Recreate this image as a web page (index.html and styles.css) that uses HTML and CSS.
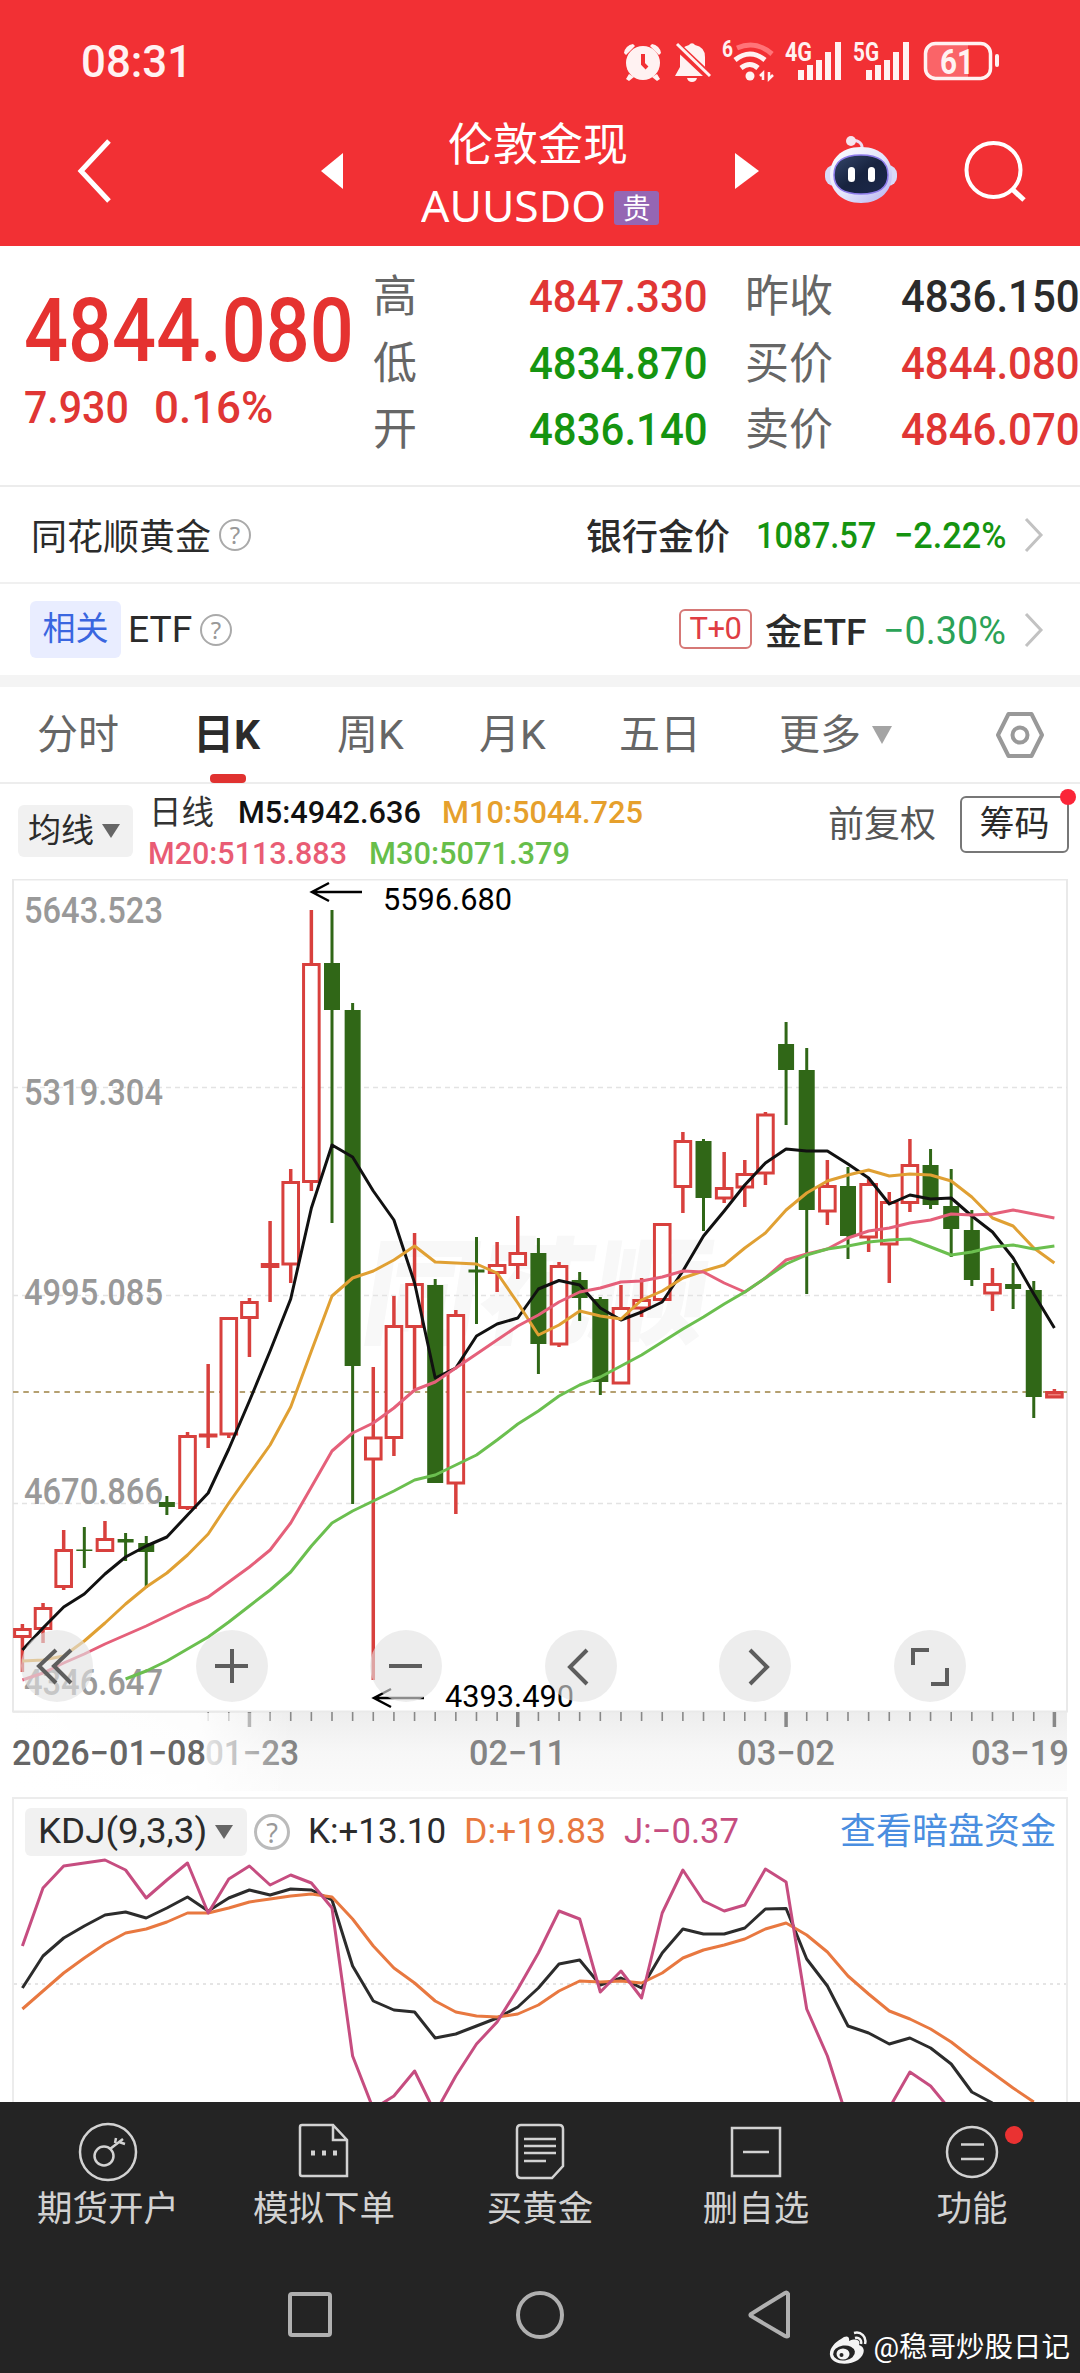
FILE: index.html
```html
<!DOCTYPE html>
<html lang="zh-CN">
<head>
<meta charset="utf-8">
<title>伦敦金现 AUUSDO</title>
<link rel="stylesheet" href="styles.css">
</head>
<body>
<header class="top">
  <div class="status">
    <span class="clock" data-w="111">08:31</span>
    <svg class="status-icons" width="384" height="50" viewBox="616 36 384 50">
      <g fill="#fff2f2" stroke="none">
        <circle cx="643" cy="63" r="17"/>
        <path d="M624 53a10 10 0 0 1 9-9l2 2-9 9zM661 53a10 10 0 0 0-9-9l-2 2 9 9zM629 74l5 3-5 4-3-2zM657 74l-5 3 5 4 3-2z"/>
        <path d="M643 54v10l4 4" fill="none" stroke="#f23034" stroke-width="4"/>
        <path d="M675 76l5-9V57q0-10 9-12a3.500 3.500 0 0 1 6 0q10 2 10 12v10l4 9zM687 78h10q-1 4-5 4t-5-4z"/>
        <path d="M675 44l37 35" stroke="#f23034" stroke-width="8"/>
        <path d="M677 44l33 32" stroke="#fff2f2" stroke-width="3"/>
        <circle cx="750" cy="76" r="4.500"/>
      </g>
      <g fill="none" stroke="#fff2f2" stroke-width="5">
        <path d="M735 60q15-12 30 0M741 68q9-7 17 0"/>
        <path d="M737 48q19-8 35 6" stroke="#ff7478"/>
        <path d="M763 80v-7l-3 3M769 72v7l4-4" stroke-width="2.500"/>
      </g>
      <g fill="#fff2f2">
        <path d="M798 70h6v10h-6zM807 65h6v15h-6zM816 60h6v20h-6zM825 52h6v28h-6zM835 42h6v38h-6z"/>
        <path d="M866 70h6v10h-6zM875 65h6v15h-6zM884 60h6v20h-6zM893 52h6v28h-6zM903 42h6v38h-6z"/>
        <text x="722" y="57" font-size="23" textLength="11" lengthAdjust="spacingAndGlyphs">6</text>
        <text x="785" y="60.500" font-size="26" textLength="27" lengthAdjust="spacingAndGlyphs">4G</text>
        <text x="853" y="60.500" font-size="26" textLength="26" lengthAdjust="spacingAndGlyphs">5G</text>
        <path d="M935 44h33v34h-33q-9 0-9-9V53q0-9 9-9z" fill="#fa6468"/>
        <rect x="925.500" y="43.500" width="65" height="35" rx="10" fill="none" stroke="#fff2f2" stroke-width="3.500"/>
        <rect x="995" y="54" width="4" height="13" rx="2"/>
        <text x="940" y="74" font-size="35" textLength="34" lengthAdjust="spacingAndGlyphs">61</text>
      </g>
    </svg>
  </div>
  <div class="titlebar">
    <svg width="40" height="70" viewBox="0 0 40 70"><path d="M35 5L7 35 35 65" class="line-w"/></svg>
    <svg width="24" height="36" viewBox="0 0 24 36"><path d="M22 0v36L0 18z" fill="#fff"/></svg>
    <div class="name">
      <h1>伦敦金现</h1>
      <p><span data-w="185">AUUSDO</span><b class="gui">贵</b></p>
    </div>
    <svg width="26" height="36" viewBox="0 0 26 36"><path d="M0 0v36l24-18z" fill="#fff"/></svg>
    <svg width="74" height="70" viewBox="0 0 74 70">
      <defs><linearGradient id="shell" x1="0" y1="0" x2="1" y2="1"><stop offset="0" stop-color="#fff"/><stop offset=".55" stop-color="#e2e3fb"/><stop offset="1" stop-color="#b5b0f0"/></linearGradient>
      <linearGradient id="visor" x1="0" y1="0" x2="1" y2="1"><stop offset="0" stop-color="#34466a"/><stop offset=".5" stop-color="#17233f"/><stop offset="1" stop-color="#1c294c"/></linearGradient></defs>
      <path d="M38 13q1-8-10-9" fill="none" stroke="#eddcf2" stroke-width="3"/><circle cx="27" cy="5" r="5" fill="#f6e4ee"/>
      <rect x="1" y="29" width="72" height="21" rx="9" fill="#d9daf8"/>
      <path d="M37 11c21 0 31 13 31 28s-11 28-31 28S6 54 6 39s10-28 31-28z" fill="url(#shell)"/>
      <path d="M37 19c19 0 27 8 27 20s-8 19-27 19-27-7-27-19 8-20 27-20z" fill="url(#visor)" stroke="#8d7bea" stroke-width="1.500"/>
      <rect x="24" y="31" width="7" height="15" rx="3.500" fill="#fff"/><rect x="44" y="31" width="7" height="15" rx="3.500" fill="#fff"/>
    </svg>
    <svg width="64" height="64" viewBox="0 0 64 64"><circle cx="29.500" cy="31" r="27" class="line-w thin"/><path d="M48 50l12 11" class="line-w"/></svg>
  </div>
</header>

<section class="quote">
  <div class="price">
    <div class="last"><span data-w="330">4844.080</span></div>
    <div class="chg"><span data-w="105">7.930</span><span data-w="119">0.16%</span></div>
  </div>
  <dl>
    <dt>高</dt><dd class="r"><span data-w="179">4847.330</span></dd><dt>昨收</dt><dd><span data-w="179">4836.150</span></dd>
    <dt>低</dt><dd class="g"><span data-w="179">4834.870</span></dd><dt>买价</dt><dd class="r"><span data-w="179">4844.080</span></dd>
    <dt>开</dt><dd class="g"><span data-w="179">4836.140</span></dd><dt>卖价</dt><dd class="r"><span data-w="179">4846.070</span></dd>
  </dl>
</section>

<section class="row gold">
  <span class="lbl">同花顺黄金</span><i class="q">?</i>
  <span class="lbl bank">银行金价</span>
  <span class="num g" data-w="120">1087.57</span><span class="num g pct" data-w="112">−2.22%</span>
  <svg width="22" height="38" viewBox="0 0 22 38"><path d="M3 3l15 16L3 35" class="chev"/></svg>
</section>
<section class="row etf">
  <span class="tag">相关</span><span class="lbl" data-w="64">ETF</span><i class="q">?</i>
  <span class="t0">T+0</span><span class="lbl med" data-w="101">金ETF</span>
  <span class="num g2" data-w="123">−0.30%</span>
  <svg width="22" height="38" viewBox="0 0 22 38"><path d="M3 3l15 16L3 35" class="chev"/></svg>
</section>

<nav class="tabs">
  <a>分时</a><a class="on">日K</a><a>周K</a><a>月K</a><a>五日</a><a>更多</a>
  <svg class="tri" width="22" height="18" viewBox="0 0 22 18"><path d="M1 0h20L11 18z" fill="#a4a4a4"/></svg>
  <svg width="50" height="50" viewBox="0 0 50 50"><path d="M13.500 4h23L47 25 36.500 46h-23L3 25z" fill="none" stroke="#999" stroke-width="4" stroke-linejoin="round"/><circle cx="25" cy="25" r="7.500" fill="none" stroke="#999" stroke-width="4"/></svg>
</nav>

<section class="ma">
  <button class="pill">均线<svg width="18" height="14" viewBox="0 0 18 14"><path d="M0 0h18L9 14z" fill="#666"/></svg></button>
  <div class="ma-values">
    <p><span class="dx">日线</span><span data-w="183">M5:4942.636</span><span class="o" data-w="201">M10:5044.725</span></p>
    <p><span class="p" data-w="199">M20:5113.883</span><span class="gr" data-w="201">M30:5071.379</span></p>
  </div>
  <span class="fq">前复权</span>
  <button class="chip">筹码</button>
</section>

<section class="chart">
  <svg id="kline" width="1080" height="918" viewBox="0 878 1080 918"></svg>
  <div class="tools">
    <button><svg viewBox="0 0 72 72"><path d="M35 20L18 36l17 17M50 20L33 36l17 17"/></svg></button>
    <button><svg viewBox="0 0 72 72"><path d="M19 36h33M36 19v34"/></svg></button>
    <button><svg viewBox="0 0 72 72"><path d="M19 36h33"/></svg></button>
    <button><svg viewBox="0 0 72 72"><path d="M42 20L25 37l17 17"/></svg></button>
    <button><svg viewBox="0 0 72 72"><path d="M31 20l17 17-17 17"/></svg></button>
    <button><svg viewBox="0 0 72 72"><path d="M19 35V20h16M53 38v16H37"/></svg></button>
  </div>
</section>

<section class="kdj">
  <div class="kdj-head">
    <button class="pill"><span data-w="169">KDJ(9,3,3)</span><svg width="18" height="14" viewBox="0 0 18 14"><path d="M0 0h18L9 14z" fill="#666"/></svg></button>
    <i class="q">?</i>
    <span data-w="138">K:+13.10</span><span class="d" data-w="142">D:+19.83</span><span class="j" data-w="115">J:−0.37</span>
    <a>查看暗盘资金</a>
  </div>
  <svg id="osc" width="1052" height="246" viewBox="14 1855 1052 246"></svg>
</section>

<footer>
  <div class="actions">
    <a><svg viewBox="0 0 60 60"><circle cx="30" cy="30" r="28"/><circle cx="26" cy="34" r="9.500"/><path d="M32 27l13-10M37 21l1-5M41 20l6 2"/></svg>期货开户</a>
    <a><svg viewBox="0 0 60 60"><path d="M8 3h31l14 15v36H8q-2 0-2-2V5q0-2 2-2zM39 3v15h14"/><path d="M17 31h4M28 31h4M39 31h4" stroke-width="5"/></svg>模拟下单</a>
    <a><svg viewBox="0 0 60 60"><path d="M11 3h38q4 0 4 4v37L42 56H11q-4 0-4-4V7q0-4 4-4z"/><path d="M14 17h32M14 24h32M14 31h32M14 39h22"/></svg>买黄金</a>
    <a><svg viewBox="0 0 60 60"><path d="M6 6h48v48H6zM17 30h26"/></svg>删自选</a>
    <a class="dot"><svg viewBox="0 0 60 60"><circle cx="30" cy="30" r="25"/><path d="M19 22.500h23M19 37h23"/></svg>功能</a>
  </div>
  <div class="sysnav">
    <svg width="48" height="54" viewBox="0 0 48 54"><rect x="4" y="6" width="40" height="41" rx="2"/></svg>
    <svg width="54" height="54" viewBox="0 0 54 54"><circle cx="27" cy="27" r="22"/></svg>
    <svg width="48" height="54" viewBox="0 0 48 54"><path d="M42 6v42q-1 1-3 0L5 28q-1-1 0-2L39 5q2-1 3 1z"/></svg>
  </div>
  <div class="mark">
    <svg width="40" height="34" viewBox="0 0 40 34"><path d="M12 8c5-4 9-3 8 2 7-3 12-1 10 4 7 2 6 10-1 15-9 6-27 5-28-5C0 18 6 11 12 8z" fill="#f4f4f4"/><ellipse cx="15" cy="22" rx="11" ry="7.500" fill="#242424" transform="rotate(-8 15 22)"/><ellipse cx="14" cy="23" rx="6.500" ry="5.500" fill="#f4f4f4"/><circle cx="12.500" cy="24" r="2" fill="#242424"/><path d="M25 2c7-2 13 4 11 11M26 7c4-1 7 2 6 6" fill="none" stroke="#f4f4f4" stroke-width="2.500"/></svg>
    <span>@稳哥炒股日记</span>
  </div>
</footer>
<script src="chart.js"></script>
</body>
</html>
```
FILE: styles.css
```css
* { box-sizing: border-box; margin: 0; padding: 0; }
body { width: 1080px; height: 2373px; overflow: hidden; background: #fff; color: #2b2b2b; font-family: Roboto, "Noto Sans CJK SC", sans-serif; display: flex; flex-direction: column; }
body > * { flex: none; }
button { border: 0; font: inherit; color: inherit; }
svg { display: block; flex: none; }
[data-w] { display: inline-block; white-space: nowrap; flex: none; }
[data-w] > span { display: inline-block; transform-origin: 0 50%; }
.r { color: #e03634; } .g { color: #159410; } .g2 { color: #2ba257; }

.top { height: 246px; background: #f23034; color: #fff; }
.status { height: 110px; padding: 36px 80px 0 81px; display: flex; justify-content: space-between; }
.clock { height: 50px; font-size: 45px; line-height: 52px; font-weight: 500; color: #fff2f2; }
.status-icons { font-weight: 700; }
.titlebar { height: 136px; display: grid; align-items: center; grid-template-columns: 247px 100px 314px 89px 140px 64px; padding: 0 0 10px 74px; }
.titlebar > svg { margin-bottom: 4px; }
.name { height: 136px; padding-top: 10px; margin-bottom: -10px; }
.name h1 { margin-left: 27px; font-size: 45px; line-height: 54px; font-weight: 400; white-space: nowrap; margin-top: -1px; }
.name p { display: flex; align-items: center; margin-top: 11px; height: 44px; font: 43px/44px "Noto Sans", sans-serif; }
.gui { width: 45px; height: 34px; margin-left: 8px; margin-top: 3px; border-radius: 3px; background: #9566b3; font: 400 28px/33px "Noto Sans CJK SC", sans-serif; text-align: center; }
.line-w { fill: none; stroke: #fff; stroke-width: 5; }
.line-w.thin { stroke-width: 4; }

.quote { height: 241px; border-bottom: 2px solid #ececec; display: flex; }
.price { width: 373px; padding-left: 24px; color: #e53230; }
.last { height: 100px; margin-top: 35px; font-size: 89px; line-height: 100px; font-weight: 500; }
.chg { display: flex; gap: 25px; font-size: 45px; line-height: 54px; margin-top: 0; color: #e03634; font-weight: 500; }
dl { display: grid; grid-template-columns: 156px 216px 156px 179px; grid-template-rows: repeat(3, 66.5px); padding-top: 18px; align-items: center; }
dt { font-size: 44px; line-height: 66px; color: #666; }
dd { font-size: 45px; line-height: 66px; height: 66px; font-weight: 500; }

.row { display: flex; align-items: center; font-size: 36px; padding: 0 35px 0 31px; }
.gold { height: 97px; border-bottom: 2px solid #f0f0f0; }
.gold > .lbl { margin-top: -2px; }
.q { width: 32px; height: 32px; border: 2px solid #aaa; border-radius: 50%; color: #999; font: 24px/28px "Noto Sans", sans-serif; text-align: center; flex: none; }
.gold .q { margin-left: 8px; }
.bank { margin-left: auto; margin-right: 26px; font-weight: 500; }
.med { font-weight: 500; }
.row .num { font-weight: 500; font-size: 37px; margin-top: 2px; }
.row .pct { margin-left: 18px; }
.row svg { margin-left: 17px; }
.etf { height: 91px; padding-left: 30px; }
.tag { width: 91px; height: 57px; margin-right: 7px; border-radius: 6px; background: #e9edff; color: #3a66e0; font-size: 33px; line-height: 55px; text-align: center; }
.etf .q { margin-left: 8px; }
.etf .med { margin-top: -2px; }
.t0 { margin-left: auto; width: 73px; height: 40px; margin-right: 13px; border: 2px solid #d67876; border-radius: 6px; color: #df3d43; font-size: 31px; line-height: 36px; text-align: center; letter-spacing: -.5px; margin-top: -2px; }
.etf .num { margin-left: 17px; font-weight: 400; font-size: 39px; }
.chev { fill: none; stroke: #c2c2c2; stroke-width: 3; }

.tabs { height: 109px; border-top: 12px solid #f4f4f4; border-bottom: 2px solid #ededed; display: grid; grid-template-columns: 156px 144px 142px 140px 160px 92px 124px 50px; align-items: center; padding-left: 37px; font-size: 41px; color: #666; }
.tabs a { position: relative; line-height: 60px; white-space: nowrap; }
.tabs .on { color: #2b2b2b; font-weight: 700; }
.tabs .on::after { content: ""; position: absolute; left: 17px; bottom: -18px; width: 36px; height: 9px; border-radius: 4px; background: #e03230; }

.ma { height: 95px; display: flex; padding-left: 18px; font-size: 33px; }
.pill { background: #f1f1f1; border-radius: 6px; display: flex; align-items: center; }
.ma .pill { width: 115px; height: 52px; margin-top: 21px; padding-left: 10px; gap: 8px; line-height: 50px; }
.ma-values { width: 550px; margin-left: 15px; padding-top: 8px; line-height: 41px; }
.ma-values p { display: flex; height: 41px; font-size: 32px; color: #111; font-weight: 500; }
.dx { width: 90px; font-size: 32.500px; line-height: 42px; padding-left: 1px; color: #333; font-weight: 400; }
.ma-values .o { color: #e6a02c; margin-left: 21px; } .ma-values .p { color: #e95c74; } .ma-values .gr { color: #67be4a; margin-left: 22px; }
.fq { margin-left: 130px; line-height: 82px; font-size: 36px; color: #555; white-space: nowrap; }
.chip { position: relative; width: 109px; height: 57px; margin: 12px 0 0 24px; background: #fff; border: 2px solid #777; border-radius: 6px; font-size: 35px; line-height: 50px; text-align: center; }
.chip::after { content: ""; position: absolute; right: -9px; top: -9px; width: 16px; height: 16px; border-radius: 50%; background: #fb2538; }

.chart { position: relative; height: 918px; }
.tools { position: absolute; left: 21px; top: 751px; display: flex; gap: 102.600px; }
.tools button { width: 72px; height: 72px; border-radius: 50%; background: rgba(226, 226, 226, .62); }
.tools svg { width: 72px; height: 72px; fill: none; stroke: #5d5d5d; stroke-width: 4; }

.kdj { width: 1056px; height: 305px; margin-left: 12px; border: 2px solid #ececec; border-bottom: 0; overflow: hidden; }
.kdj-head { display: flex; height: 57px; padding: 9px 0 0 11px; font-size: 35px; line-height: 48px; }
.kdj .pill { width: 222px; height: 48px; padding-left: 9px; gap: 12px; line-height: 48px; }
.kdj .q { width: 36px; height: 36px; margin: 6px 18px 0 7px; font-size: 27px; line-height: 32px; border-width: 3px; border-color: #bbb; }
.kdj .d { color: #e87840; margin-left: 18px; } .kdj .j { color: #c64d80; margin-left: 18px; }
.kdj-head a { margin-left: auto; margin-right: 10px; color: #4a8ee0; font-size: 36px; line-height: 48px; }

footer { height: 272px; background: #242424; color: #d2d2d2; position: relative; overflow: hidden; }
.actions { display: grid; grid-template-columns: repeat(5, 1fr); height: 150px; padding-top: 20px; }
.actions a { position: relative; display: flex; flex-direction: column; align-items: center; font-size: 35.500px; line-height: 54px; }
.actions svg { width: 60px; height: 60px; fill: none; stroke: #d2d2d2; stroke-width: 2.500; }
.dot::after { content: ""; position: absolute; left: 141px; top: 4px; width: 18px; height: 18px; border-radius: 50%; background: #ea3232; }
.sysnav { display: flex; justify-content: space-between; padding: 36px 286px 0 286px; }
.sysnav svg { fill: none; stroke: #b0b0b0; stroke-width: 4; }
.mark { position: absolute; right: 10px; bottom: 6px; display: flex; align-items: center; gap: 4px; color: #fff; font-size: 28.500px; line-height: 40px; }
```
FILE: chart.js
```js
// Squeeze or stretch a label to its column width.
document.querySelectorAll('[data-w]').forEach(el => {
  const inner = document.createElement('span');
  inner.textContent = el.textContent;
  el.textContent = '';
  el.append(inner);
  const w = +el.dataset.w;
  inner.style.transform = `scaleX(${w / inner.offsetWidth})`;
  el.style.width = w + 'px';
});

const X = i => 22.4 + 20.64 * i;
const line = (ys, color, w, from = 0) =>
  `<polyline fill="none" stroke="${color}" stroke-width="${w}" stroke-linejoin="round" points="${ys.map((y, i) => X(i + from).toFixed(1) + ',' + y).join(' ')}"/>`;
const label = (x, y, w, size, color, t, extra = '') =>
  `<text x="${x}" y="${y}" font-size="${size}" fill="${color}" textLength="${w}" lengthAdjust="spacingAndGlyphs" ${extra}>${t}</text>`;

// direction, high, body top, body bottom, low
const candles = [
['u',1623,1627,1637,1671],['u',1602,1606,1629,1642],['u',1529,1548,1587,1589],['d',1526,1548.5,1550,1567],['u',1520,1537,1551,1551],['d',1532,1538,1541.5,1560],['d',1535,1542,1551,1587],['d',1495,1501,1506,1514],['u',1431,1434,1508,1509],['u',1363,1432.5,1436.5,1447],
['u',1316,1316,1434.5,1437],['u',1297,1300,1318,1356],['u',1220,1262,1267,1301],['u',1168,1180,1264.5,1282],['u',909,962,1182,1190],['d',909,962,1009,1222],['d',1002,1009,1365,1503],['u',1366,1435.5,1459.5,1679],['u',1295,1324,1438,1455],['u',1232,1282,1327,1388],
['d',1278,1284,1482,1482],['u',1309,1313,1483.5,1513],['d',1236,1268.5,1271.5,1323],['u',1241,1263,1273,1291],['u',1215,1251,1265,1278],['d',1237,1252,1343,1373],['u',1261,1264,1344.5,1346],['d',1271,1279,1297,1320],['d',1296,1298,1381,1394],['u',1284,1306,1383.5,1383],
['u',1277,1298,1308.5,1316],['u',1222,1222,1300,1300],['u',1131,1139,1187,1212],['d',1138,1140,1197,1230],['u',1151,1186,1198.5,1202],['u',1159,1172,1187.5,1206],['u',1111,1112.5,1173.5,1184],['d',1021,1043,1069,1124],['d',1047,1069,1209,1293],['u',1159,1184,1211.5,1224],
['d',1166,1185,1235,1258],['u',1178,1182,1237.5,1251],['u',1191,1200,1244.5,1282],['u',1138,1163,1203,1211],['d',1148,1164,1204,1208],['d',1168,1205,1228,1256],['d',1209,1229,1279,1285],['u',1267,1282,1293.5,1310],['d',1262,1283,1288,1308],['d',1280,1289,1396,1417],['u',1388,1390,1397.5,1397]];

const ma5 = [1649,1627,1606,1593,1573,1556,1545,1536,1514,1492,1448,1400,1350,1298,1207,1144,1156,1190,1219,1282,1377,1367,1335,1323,1317,1288,1279.5,1284,1307,1319,1311,1301,1270,1235,1210,1184,1162,1148,1150,1150,1163,1177,1203,1194,1198,1197,1215,1231,1257,1293,1327];
const ma10 = [1660,1659,1655,1640,1622,1603,1586,1572,1554,1533,1502,1473,1444,1406,1350,1295,1277,1270,1259,1245,1261,1262,1263,1272,1302,1334,1324,1310,1315,1318,1299,1290,1277,1270,1264,1247,1232,1209,1192,1180,1174,1169,1175,1173,1174,1180,1196,1217,1225,1247,1262];
const ma20 = [1679,1672,1662,1653,1643,1634,1625,1615,1605,1596,1581,1566,1549,1522,1486,1450,1432,1422,1407,1389,1381,1367,1353,1339,1325,1314,1301,1291,1287,1281,1280,1276,1270,1271,1282,1291,1277,1259,1253,1248,1237,1230,1227,1222,1219,1213,1214,1213,1209,1213,1217];
const ma30 = [1678,1670,1660,1648,1636,1621,1605,1589,1571,1545,1522,1510,1500,1490,1479,1474,1464,1454,1439,1423,1410,1395,1384,1376,1365,1354,1341,1328,1316,1303,1291,1277,1263,1254,1248,1245,1241,1239,1238,1246,1254,1251,1246,1244,1248,1245];

let s = `<defs>
<linearGradient id="rail" x1="0" y1="0" x2="0" y2="1"><stop offset="0" stop-color="#ededed"/><stop offset=".5" stop-color="#f7f7f7"/><stop offset="1" stop-color="#fbfbfb"/></linearGradient>
<linearGradient id="fade"><stop offset="0" stop-color="#fff"/><stop offset=".66" stop-color="#fff" stop-opacity=".88"/><stop offset="1" stop-color="#fff" stop-opacity="0"/></linearGradient></defs>`;
s += `<g transform="translate(358 1334) skewX(-9)"><text font-size="116" font-weight="900" fill="#f8f8f8" textLength="345">同花顺</text></g>`;
s += `<rect x="13" y="1711" width="1054" height="79" fill="url(#rail)"/>`;
s += `<rect x="13" y="878.500" width="1054" height="832" fill="none" stroke="#e9e9e9" stroke-width="2"/>`;
for (const y of [1086.5, 1294.5, 1502.5]) s += `<path d="M13 ${y}H1067" stroke="#e3e3e3" stroke-width="1.500" stroke-dasharray="5 4"/>`;
s += `<path d="M13 1391H1067" stroke="#b5a070" stroke-width="1.900" stroke-dasharray="5.500 4.800"/>`;
[['5643.523',922],['5319.304',1104],['4995.085',1304],['4670.866',1503],['4346.647',1694]].forEach(([t, y]) => s += label(24, y, 139, 36, '#999', t, 'font-weight="500"'));

candles.forEach(([dir, h, t, b, l], i) => {
  const x = X(i), up = dir === 'u';
  if (up) {
    s += `<path d="M${x} ${h}V${t + 1}M${x} ${b - 1}V${l}" stroke="#d8403d" stroke-width="3.500"/>`;
    s += b - t < 6
      ? `<rect x="${x - 9.3}" y="${t}" width="18.600" height="${b - t}" fill="#d8403d"/>`
      : `<rect x="${x - 7.8}" y="${t + 1.5}" width="15.600" height="${b - t - 3}" fill="${i === 50 ? '#ef7f79' : '#fff'}" stroke="#d8403d" stroke-width="3"/>`;
  } else {
    s += `<path d="M${x} ${h}V${l}" stroke="#306717" stroke-width="3"/><rect x="${x - 8}" y="${t}" width="16" height="${b - t}" fill="#306717"/>`;
  }
});
s += line(ma5, '#111', 3) + line(ma10, '#e0a033', 3) + line(ma20, '#e5607a', 3) + line(ma30, '#6bbf4f', 3, 5);

s += `<path d="M362 891H312M329 882L312 891 329 900M424 1697H374M391 1688L374 1697 391 1706" fill="none" stroke="#000" stroke-width="2.500"/>`;
s += label(383, 909, 129, 31, '#000', '5596.680') + label(445, 1706, 129, 31, '#000', '4393.490');
for (let i = 9; i <= 50; i++) {
  const major = i === 11 || i === 24 || i === 37 || i === 50;
  s += `<path d="M${X(i)} 1711V${major ? 1726 : 1720}" stroke="#888" stroke-width="${major ? 3.5 : 1.6}"/>`;
}
const axis = 'font-weight="500"';
s += label(205, 1764, 94, 35, '#848484', '01−23', axis) + label(469, 1764, 97, 35, '#848484', '02−11', axis) + label(737, 1764, 98, 35, '#848484', '03−02', axis) + label(971, 1764, 98, 35, '#848484', '03−19', axis);
s += `<rect x="12" y="1712" width="280" height="79" fill="url(#fade)"/>`;
s += label(12, 1764, 194, 35, '#666', '2026−01−08', axis);
document.getElementById('kline').innerHTML = s;

const k = [1987,1955,1937,1925,1914,1911,1917,1907,1896,1910,1897,1889,1894,1888,1889,1899,1965,2000,2009,2011,2037,2033,2025,2017,2006,1987,1963,1959,1984,1977,1987,1952,1928,1933,1933,1927,1908,1907.5,1958,1985,2025,2032,2043,2037,2047,2063,2091,2102];
const d = [2008,1990,1972,1957,1943,1932,1928,1921,1912,1912,1907,1901,1898,1895,1893,1896,1918,1945,1967,1982,2000,2011,2015,2016,2013,2004,1990,1980,1981,1980,1982,1972,1957,1949,1944,1938,1928,1922,1934,1951,1975,1993,2010,2018,2028,2041,2057,2072,2087,2101];
const j = [1945,1887,1865,1862,1859,1869,1897,1879,1862,1912,1878,1865,1884,1874,1882,1907,2055,2108,2095,2070,2112,2075,2043,2021,1988,1952,1910,1918,1991,1970,1997,1912,1869,1900,1910,1904,1868,1881,2008,2055,2120,2150,2107,2071,2085,2110];
document.getElementById('osc').innerHTML =
  `<path d="M14 1983H1066" stroke="#ddd" stroke-width="1.500" stroke-dasharray="3 4"/>` +
  line(k, '#2c2c2c', 3) + line(d, '#e87840', 3) + line(j, '#c64d80', 3);
```
